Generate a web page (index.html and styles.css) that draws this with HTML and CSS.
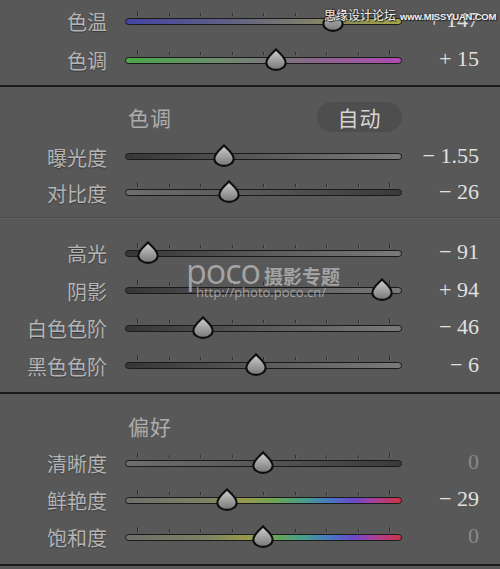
FILE: index.html
```html
<!DOCTYPE html>
<html lang="zh-CN">
<head>
  <meta charset="UTF-8">
  <meta name="viewport" content="width=device-width, initial-scale=1.0">
  <title>基本 - 色调</title>
  <link rel="stylesheet" href="styles.css">
</head>
<body>
  <div class="panel">

    <!-- 白平衡 -->
    <section class="section sec-wb">
      <div class="row">
        <span class="label">色温</span>
        <div class="slider">
          <div class="ticks"><i></i><i></i><i></i><i></i><i></i><i></i><i></i><i></i><i></i></div>
          <div class="track temp"></div>
          <svg class="thumb" style="left:75.1%" viewBox="0 0 20 21"><use href="#drop"/></svg>
        </div>
        <span class="value">+ 147</span>
      </div>
      <div class="row">
        <span class="label">色调</span>
        <div class="slider">
          <div class="ticks"><i></i><i></i><i></i><i></i><i></i><i></i><i></i><i></i><i></i></div>
          <div class="track tint"></div>
          <svg class="thumb" style="left:54.5%" viewBox="0 0 20 21"><use href="#drop"/></svg>
        </div>
        <span class="value">+ 15</span>
      </div>
    </section>

    <!-- 色调 -->
    <section class="section sec-tone">
      <div class="head">
        <span class="title">色调</span>
        <button class="auto">自动</button>
      </div>
      <div class="row">
        <span class="label">曝光度</span>
        <div class="slider">
          <div class="track dark-light"></div>
          <svg class="thumb" style="left:35.7%" viewBox="0 0 20 21"><use href="#drop"/></svg>
        </div>
        <span class="value">− 1.55</span>
      </div>
      <div class="row">
        <span class="label">对比度</span>
        <div class="slider">
          <div class="ticks"><i></i><i></i><i></i><i></i><i></i><i></i><i></i><i></i><i></i></div>
          <div class="track light-dark"></div>
          <svg class="thumb" style="left:37.5%" viewBox="0 0 20 21"><use href="#drop"/></svg>
        </div>
        <span class="value">− 26</span>
      </div>
    </section>

    <section class="section sec-tone2">
      <div class="row">
        <span class="label">高光</span>
        <div class="slider">
          <div class="ticks"><i></i><i></i><i></i><i></i><i></i><i></i><i></i><i></i><i></i></div>
          <div class="track dark-light"></div>
          <svg class="thumb" style="left:8.3%" viewBox="0 0 20 21"><use href="#drop"/></svg>
        </div>
        <span class="value">− 91</span>
      </div>
      <div class="row">
        <span class="label">阴影</span>
        <div class="slider">
          <div class="ticks"><i></i><i></i><i></i><i></i><i></i><i></i><i></i><i></i><i></i></div>
          <div class="track dark-light"></div>
          <svg class="thumb" style="left:92.8%" viewBox="0 0 20 21"><use href="#drop"/></svg>
        </div>
        <span class="value">+ 94</span>
      </div>
      <div class="row">
        <span class="label">白色色阶</span>
        <div class="slider">
          <div class="ticks"><i></i><i></i><i></i><i></i><i></i><i></i><i></i><i></i><i></i></div>
          <div class="track dark-light"></div>
          <svg class="thumb" style="left:28.2%" viewBox="0 0 20 21"><use href="#drop"/></svg>
        </div>
        <span class="value">− 46</span>
      </div>
      <div class="row">
        <span class="label">黑色色阶</span>
        <div class="slider">
          <div class="ticks"><i></i><i></i><i></i><i></i><i></i><i></i><i></i><i></i><i></i></div>
          <div class="track dark-light"></div>
          <svg class="thumb" style="left:47.3%" viewBox="0 0 20 21"><use href="#drop"/></svg>
        </div>
        <span class="value">− 6</span>
      </div>

      <!-- 水印 -->
      <div class="mark-poco">
        <div class="mark-top"><span class="poco">poco</span><span class="zt">摄影专题</span></div>
        <div class="mark-url">http://photo.poco.cn/</div>
      </div>
    </section>

    <!-- 偏好 -->
    <section class="section sec-pref">
      <div class="head">
        <span class="title">偏好</span>
      </div>
      <div class="row">
        <span class="label">清晰度</span>
        <div class="slider">
          <div class="ticks"><i></i><i></i><i></i><i></i><i></i><i></i><i></i><i></i><i></i></div>
          <div class="track light-dark"></div>
          <svg class="thumb" style="left:49.8%" viewBox="0 0 20 21"><use href="#drop"/></svg>
        </div>
        <span class="value zero">0</span>
      </div>
      <div class="row">
        <span class="label">鲜艳度</span>
        <div class="slider">
          <div class="ticks"><i></i><i></i><i></i><i></i><i></i><i></i><i></i><i></i><i></i></div>
          <div class="track spectrum"></div>
          <svg class="thumb" style="left:36.8%" viewBox="0 0 20 21"><use href="#drop"/></svg>
        </div>
        <span class="value">− 29</span>
      </div>
      <div class="row">
        <span class="label">饱和度</span>
        <div class="slider">
          <div class="ticks"><i></i><i></i><i></i><i></i><i></i><i></i><i></i><i></i><i></i></div>
          <div class="track spectrum"></div>
          <svg class="thumb" style="left:49.8%" viewBox="0 0 20 21"><use href="#drop"/></svg>
        </div>
        <span class="value zero">0</span>
      </div>
    </section>

    <div class="mark-missyuan"><span class="sy">思缘设计论坛</span><span class="url">www.MISSYUAN.COM</span></div>
  </div>

  <!-- 滑块的水滴形状 -->
  <svg class="defs" width="0" height="0">
    <defs>
      <linearGradient id="dropFill" x1="0" y1="0" x2="0" y2="1">
        <stop offset="0" stop-color="#d0d0d0"/>
        <stop offset="1" stop-color="#767676"/>
      </linearGradient>
      <path id="drop" d="M10 1.2 C12.5 4.2 18.8 8.2 18.8 13.4 A8.8 6.6 0 0 1 1.2 13.4 C1.2 8.2 7.5 4.2 10 1.2 Z" fill="url(#dropFill)" stroke="#0e0e0e" stroke-width="1.9"/>
    </defs>
  </svg>
</body>
</html>
```

FILE: styles.css
```css
body {
  margin: 0;
  background-color: #585858;
  font-family: "Noto Sans CJK SC", "Noto Sans", sans-serif;
}

.panel {
  position: relative;
  width: 500px;
  overflow: hidden;
}

.section {
  position: relative;
}

.sec-wb {
  padding-top: 2px;
  height: 83px;
  border-bottom: 2px solid #1b1b1b;
}

.sec-tone {
  padding-top: 15px;
  padding-bottom: 6px;
  border-bottom: 1px solid #4a4a4a;
}

.sec-tone2 {
  padding-top: 16px;
  padding-bottom: 7px;
  border-top: 1px solid #606060;
  border-bottom: 2px solid #1b1b1b;
}

.sec-pref {
  padding-top: 17px;
  padding-bottom: 8px;
  border-bottom: 2px solid #1b1b1b;
}

.head {
  display: flex;
  align-items: center;
  justify-content: space-between;
  height: 30px;
  padding-left: 128px;
  width: 274px;
}

.title {
  font-size: 21px;
  color: #acacac;
  letter-spacing: 1px;
}

.auto {
  width: 85px;
  height: 30px;
  border: none;
  border-radius: 15px;
  background-color: #4e4e4e;
  color: #d6d6d6;
  font-family: inherit;
  font-size: 21px;
  line-height: 30px;
  padding: 0;
  letter-spacing: 1px;
}

.sec-tone .head {
  margin-bottom: 7px;
}

.sec-pref .head {
  margin-bottom: 4px;
}

.row {
  display: grid;
  grid-template-columns: 107px 277px 59px;
  column-gap: 18px;
  align-items: center;
}

.sec-wb .row { height: 39px; }
.sec-tone .row { height: 36px; }
.sec-tone2 .row { height: 37.5px; }
.sec-pref .row { height: 37px; }

.label {
  text-align: right;
  font-size: 20px;
  color: #b4b4b4;
  text-shadow: 0 1px 1px #3a3a3a;
  white-space: nowrap;
}

.value {
  text-align: right;
  font-family: "Liberation Serif", serif;
  font-size: 22px;
  color: #e0e0e0;
  padding-bottom: 3px;
  white-space: nowrap;
}

.value.zero {
  color: #8a8a8a;
}

.slider {
  position: relative;
  height: 8px;
}

.track {
  height: 5px;
  border: 1.5px solid #1a1a1a;
  border-radius: 4px;
}

.track.temp {
  background: linear-gradient(to right, #4444a4, #5e5e86 35%, #787870 60%, #a6a648);
}

.track.tint {
  background: linear-gradient(to right, #48a848, #6f8a6f 35%, #807080 60%, #b048b4);
}

.track.dark-light {
  background: linear-gradient(to right, #363636, #5a5a5a 50%, #7a7a7a);
}

.track.light-dark {
  background: linear-gradient(to right, #6e6e6e, #565656 50%, #3a3a3a);
}

.track.spectrum {
  background: linear-gradient(to right, #6c706a, #7e8262 30%, #98984c 43%, #6ca454 54%, #48a088 64%, #4878c4 74%, #6c48c8 83%, #a8409c 90%, #cc3444);
}

.ticks {
  position: absolute;
  left: 12px;
  right: 12px;
  bottom: 10px;
  display: flex;
  justify-content: space-between;
  align-items: flex-end;
}

.ticks i {
  display: block;
  width: 1px;
  height: 3px;
  background-color: #2e2e2e;
  box-shadow: 1px 0 0 #666;
}

.ticks i:first-child,
.ticks i:last-child {
  height: 5px;
}

.thumb {
  position: absolute;
  top: -9px;
  width: 22px;
  height: 23px;
  margin-left: -11px;
  overflow: visible;
}

.defs {
  position: absolute;
}

.mark-poco {
  position: absolute;
  left: 186px;
  top: 38px;
  color: rgba(190, 190, 190, 0.75);
  pointer-events: none;
}

.mark-top {
  display: flex;
  align-items: baseline;
  gap: 4px;
  height: 28px;
}

.poco {
  font-family: "Open Sans", sans-serif;
  font-size: 34px;
  line-height: 28px;
  letter-spacing: -1px;
}

.zt {
  font-size: 19px;
  font-weight: bold;
}

.mark-url {
  font-family: "Open Sans", sans-serif;
  font-size: 13px;
  line-height: 14px;
  padding-left: 10px;
}

.mark-missyuan {
  position: absolute;
  left: 324px;
  top: 6px;
  display: flex;
  align-items: baseline;
  gap: 4px;
  color: #f2f2f2;
  text-shadow: 0 0 2px #222, 1px 1px 1px #222;
  white-space: nowrap;
  pointer-events: none;
}

.mark-missyuan .sy {
  font-size: 12px;
}

.mark-missyuan .url {
  font-family: "Liberation Sans", sans-serif;
  font-size: 9.5px;
  font-weight: bold;
  letter-spacing: -0.2px;
}
```
